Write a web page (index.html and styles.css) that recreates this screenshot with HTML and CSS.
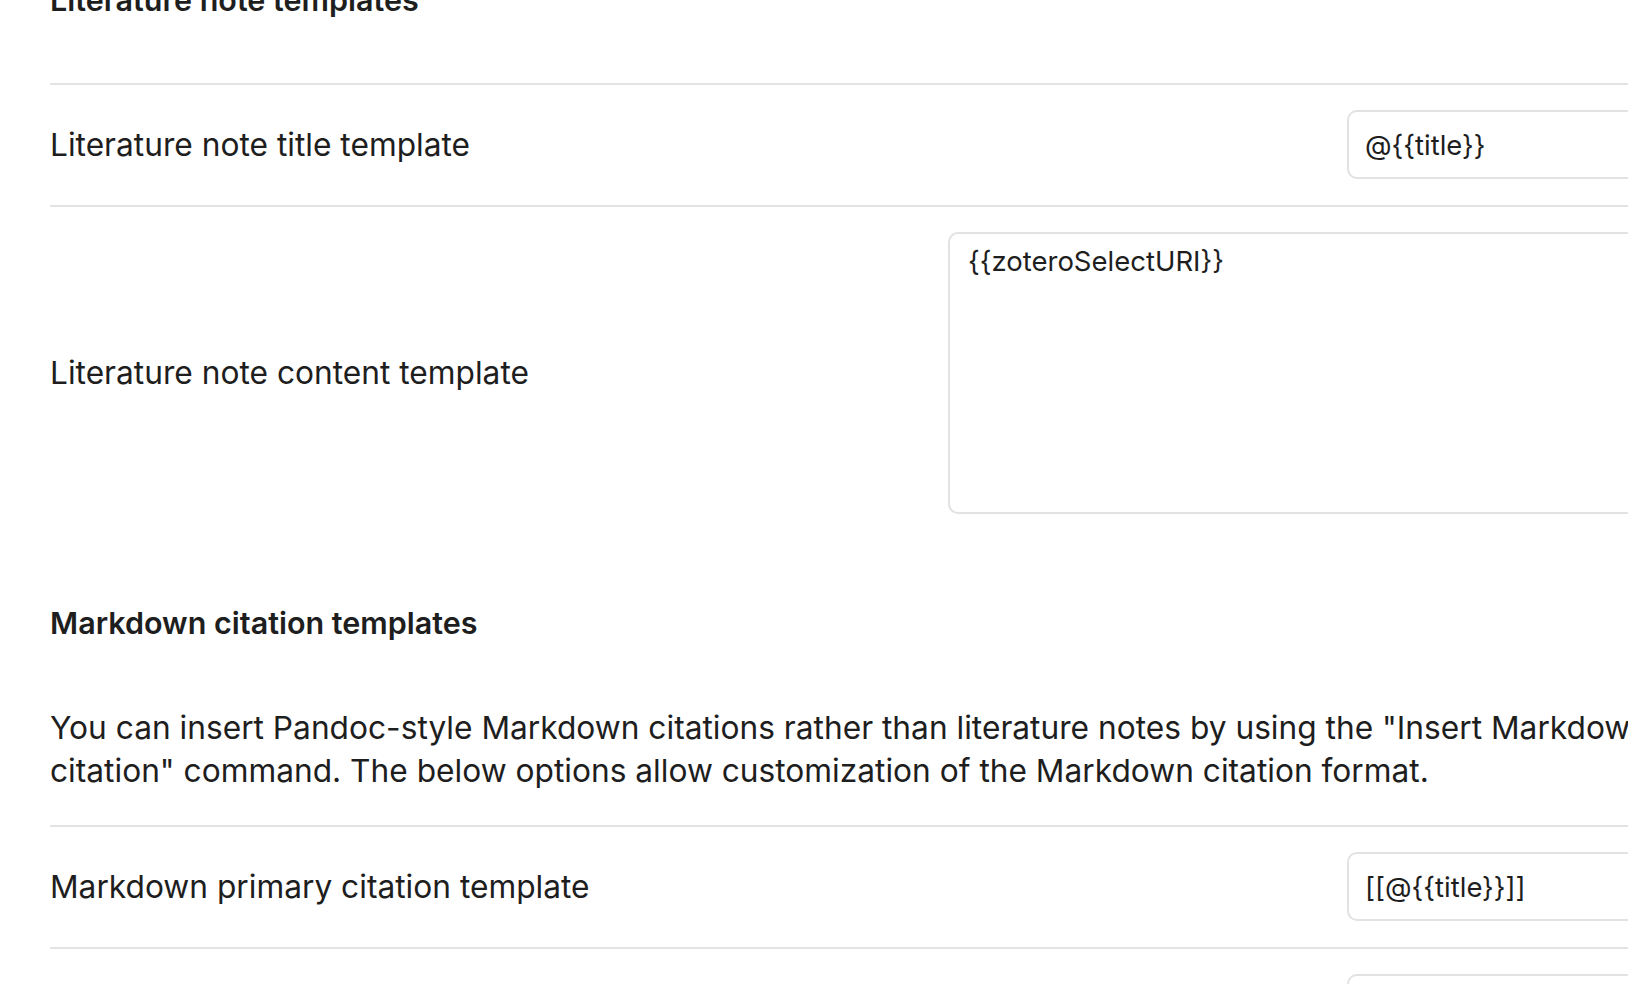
FILE: index.html
```html
<!DOCTYPE html>
<html lang="en">
<head>
<meta charset="utf-8">
<title>Citation plugin settings</title>
<link rel="stylesheet" href="styles.css">
</head>
<body>
<div class="settings">
  <div class="setting-heading first">Literature note templates</div>
  <div class="setting-item">
    <div class="setting-name">Literature note title template</div>
    <div class="setting-control"><input class="text-input" type="text" value="@{{title}}"></div>
  </div>
  <div class="setting-item">
    <div class="setting-name">Literature note content template</div>
    <div class="setting-control wide"><textarea class="text-area">{{zoteroSelectURI}}</textarea></div>
  </div>
  <div class="setting-heading">Markdown citation templates</div>
  <p class="setting-desc">You can insert Pandoc-style Markdown citations rather than literature notes by using the "Insert Markdown citation" command. The below options allow customization of the Markdown citation format.</p>
  <div class="setting-item">
    <div class="setting-name">Markdown primary citation template</div>
    <div class="setting-control"><input class="text-input" type="text" value="[[@{{title}}]]"></div>
  </div>
  <div class="setting-item">
    <div class="setting-name">Markdown secondary citation template</div>
    <div class="setting-control"><input class="text-input" type="text" value="[[@{{citekey}}]]"></div>
  </div>
</div>
</body>
</html>
```

FILE: styles.css
```css
html, body {
  margin: 0;
  padding: 0;
  background: #ffffff;
  overflow: hidden;
  height: 984px;
}

body {
  font-family: Inter, "Noto Sans", sans-serif;
  color: #1e1e1e;
  font-size: 31.7px;
}

.settings {
  box-sizing: border-box;
  width: 1700px;
  margin-top: -18px;
  padding-left: 50px;
}

.setting-heading {
  font-weight: 600;
  font-size: 30.5px;
  line-height: 35px;
  padding: 65px 0 66px;
}

.setting-heading.first {
  padding-top: 0;
}

.setting-item {
  display: flex;
  align-items: center;
  justify-content: space-between;
  border-top: 2px solid #e3e3e3;
  padding: 25px 0 26px;
}

.setting-name {
  flex: 0 0 auto;
  line-height: 40px;
}

.setting-control {
  width: 353px;
  flex: 0 0 auto;
}

.setting-control.wide {
  width: 752px;
}

.text-input,
.text-area {
  box-sizing: border-box;
  width: 100%;
  font-family: Inter, "Noto Sans", sans-serif;
  font-size: 27.5px;
  color: #1e1e1e;
  background: #ffffff;
  border: 2px solid #e2e2e2;
  border-radius: 10px;
  outline: none;
}

.text-input {
  height: 69px;
  padding: 0 16px;
}

.text-area {
  height: 282px;
  padding: 11px 18px;
  resize: none;
  line-height: 32px;
  display: block;
}

.setting-desc {
  margin: 0 0 33px;
  line-height: 43px;
}
```
